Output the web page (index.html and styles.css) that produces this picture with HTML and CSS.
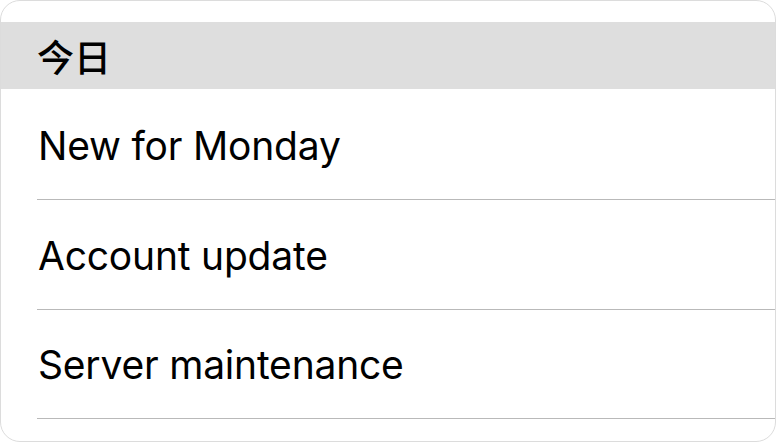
FILE: index.html
```html
<!DOCTYPE html>
<html>
<head>
<meta charset="utf-8">
<link rel="stylesheet" href="styles.css">
</head>
<body>
<div class="card">
  <div class="section-header">今日</div>
  <ul class="list">
    <li class="row"><span class="row-text">New for Monday</span></li>
    <li class="row"><span class="row-text">Account update</span></li>
    <li class="row"><span class="row-text">Server maintenance</span></li>
  </ul>
</div>
</body>
</html>
```
FILE: styles.css
```css
html, body {
  margin: 0;
  padding: 0;
  background: #ffffff;
}
body {
  font-family: Inter, "Noto Sans CJK SC", sans-serif;
  color: #000;
}
.card {
  box-sizing: border-box;
  width: 776px;
  height: 442px;
  border: 1px solid #dcdcdc;
  border-radius: 20px;
  overflow: hidden;
  padding-top: 21px;
}
.section-header {
  height: 67px;
  background: #dedede;
  display: flex;
  align-items: center;
  padding-left: 36px;
  font-size: 37px;
  font-weight: 500;
  font-family: "Noto Sans CJK SC", sans-serif;
}
.list {
  list-style: none;
  margin: 0;
  padding: 1px 0 0 36px;
}
.row {
  height: 108px;
  border-bottom: 1px solid #b9b9b9;
  display: flex;
  align-items: center;
  padding-left: 1px;
  padding-top: 1px;
}
.row:last-child {
  height: 107px;
}
.row-text {
  font-size: 39px;
  font-weight: 400;
  letter-spacing: -0.2px;
}
```
